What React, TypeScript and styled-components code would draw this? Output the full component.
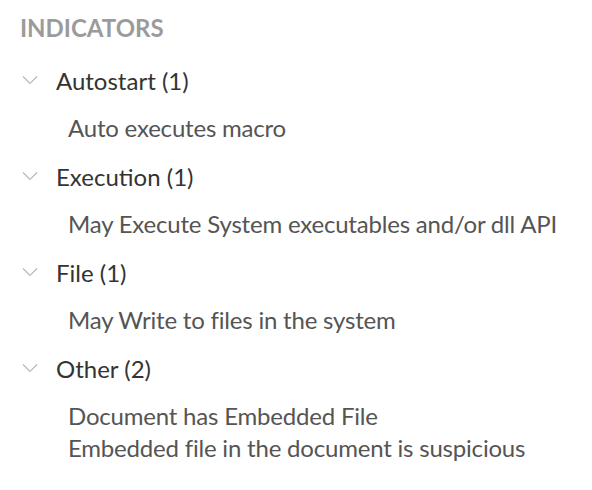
import React from "react";
import styled, { createGlobalStyle } from "styled-components";

const Global = createGlobalStyle`
  html, body { margin: 0; padding: 0; background: #ffffff; }
  body { font-family: Lato, "Noto Sans", sans-serif; }
`;

const Panel = styled.section`
  padding: 14px 20px 0 20px;
  display: flex;
  flex-direction: column;
`;

const Title = styled.h2`
  margin: 0 0 14px 0;
  font-size: 24px;
  line-height: 28px;
  font-weight: 700;
  color: #9b9b9b;
  letter-spacing: 0;
`;

const Group = styled.div`
  display: flex;
  flex-direction: column;
`;

const Row = styled.div`
  display: flex;
  align-items: center;
  height: 48px;
`;

const Chevron = styled.svg`
  width: 16px;
  height: 10px;
  margin-left: 2px;
  margin-right: 18px;
  flex: none;
`;

const Label = styled.span`
  font-size: 24px;
  font-weight: 400;
  color: #333333;
`;

const Items = styled.div`
  padding: 8px 0 8px 48px;
  display: flex;
  flex-direction: column;
`;

const Item = styled.div`
  font-size: 24px;
  line-height: 32px;
  letter-spacing: -0.2px;
  color: #555555;
`;

const data: { name: string; items: string[] }[] = [
  { name: "Autostart", items: ["Auto executes macro"] },
  { name: "Execution", items: ["May Execute System executables and/or dll API"] },
  { name: "File", items: ["May Write to files in the system"] },
  {
    name: "Other",
    items: ["Document has Embedded File", "Embedded file in the document is suspicious"],
  },
];

export default function App() {
  return (
    <>
      <Global />
      <Panel>
        <Title>INDICATORS</Title>
        {data.map((g) => (
          <Group key={g.name}>
            <Row>
              <Chevron viewBox="0 0 16 10" fill="none">
                <path d="M1 1.5 L8 8.5 L15 1.5" stroke="#b8b8b8" strokeWidth="1.1" />
              </Chevron>
              <Label>
                {g.name} ({g.items.length})
              </Label>
            </Row>
            <Items>
              {g.items.map((it) => (
                <Item key={it}>{it}</Item>
              ))}
            </Items>
          </Group>
        ))}
      </Panel>
    </>
  );
}
